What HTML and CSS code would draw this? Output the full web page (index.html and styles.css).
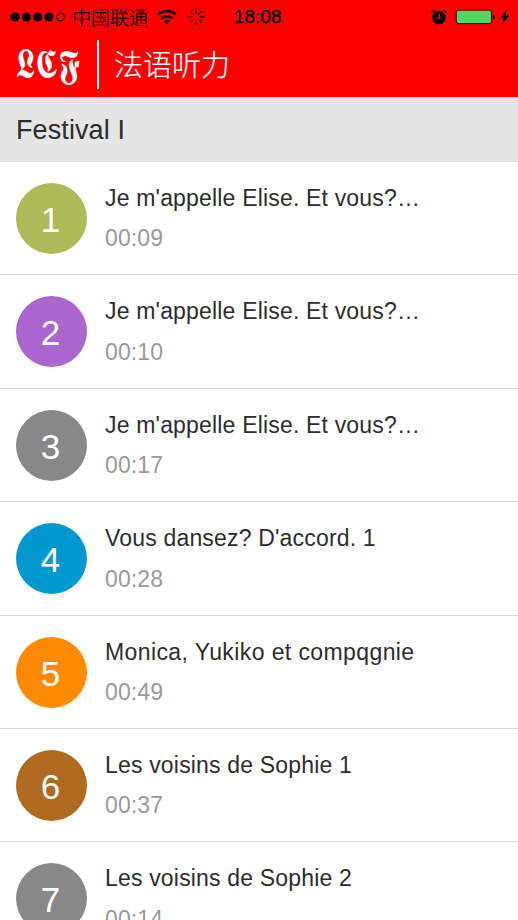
FILE: index.html
```html
<!DOCTYPE html>
<html lang="zh-CN">
<head>
<meta charset="utf-8">
<title>法语听力</title>
<link rel="stylesheet" href="styles.css">
</head>
<body>
<header class="header">
  <div class="status">
    <svg class="signal" width="56" height="12" viewBox="0 0 56 12"><circle cx="5" cy="6" r="4.6"/><circle cx="16.4" cy="6" r="4.6"/><circle cx="27.7" cy="6" r="4.6"/><circle cx="39" cy="6" r="4.6"/><circle cx="50.4" cy="6" r="4" fill="none" stroke="#000"/></svg>
    <span class="carrier">中国联通</span>
    <svg class="wifi" width="20" height="16" viewBox="0 0 20 16"><g fill="none" stroke="#000" stroke-width="2.5"><path d="M1.2 5.7a12.5 12.5 0 0 1 17.6 0"/><path d="M4.6 9.5a7.7 7.7 0 0 1 10.8 0"/></g><path d="M6.7 12q3.3-2.7 6.6 0L10 15.2z"/></svg>
    <svg class="spinner" width="18" height="18" viewBox="-9 -9 18 18" stroke="#000" stroke-width="1.4" stroke-linecap="round"><path d="M0-4v-4" opacity=".85"/><path d="M2.8-2.8l2.8-2.8" opacity=".9"/><path d="M4 0h4" opacity=".85"/><path d="M2.8 2.8l2.8 2.8" opacity=".7"/><path d="M0 4v4" opacity=".5"/><path d="M-2.8 2.8l-2.8 2.8" opacity=".4"/><path d="M-4 0h-4" opacity=".4"/><path d="M-2.8-2.8l-2.8-2.8" opacity=".4"/></svg>
    <span class="time">18:08</span>
    <svg class="alarm" width="16" height="16" viewBox="0 0 16 16"><circle cx="8" cy="8.6" r="6.8"/><path d="M.7 4.1A5 5 0 0 1 3.8 1.2M12.2 1.2a5 5 0 0 1 3.1 2.9" fill="none" stroke="#000" stroke-width="1.4"/><path d="M8.5 4.5v4.7H5" fill="none" stroke="red" stroke-width="1.3"/></svg>
    <svg class="battery" width="40" height="16" viewBox="0 0 40 16"><rect x="1.2" y="1.1" width="35.4" height="13.5" rx="2" fill="#4cd964" stroke="#720000" stroke-width="1.4"/><path d="M37.8 5.2q2.2.4 2.2 2.7t-2.2 2.7z"/></svg>
    <svg class="bolt" width="10" height="16" viewBox="0 0 10 16"><path d="M6.5.8.4 9h3.5L2 15.2 9.4 6.5H5.8z"/></svg>
  </div>
  <div class="bar">
    <span class="logo">𝕷𝕮𝕱</span>
    <i class="divider"></i>
    <h1 class="heading">法语听力</h1>
  </div>
</header>
<h2 class="section">Festival I</h2>
<ul class="list">
  <li class="row"><b class="num olive">1</b><div class="info"><p class="title">Je m'appelle Elise. Et vous?…</p><p class="dur">00:09</p></div></li>
  <li class="row"><b class="num purple">2</b><div class="info"><p class="title">Je m'appelle Elise. Et vous?…</p><p class="dur">00:10</p></div></li>
  <li class="row"><b class="num gray">3</b><div class="info"><p class="title">Je m'appelle Elise. Et vous?…</p><p class="dur">00:17</p></div></li>
  <li class="row"><b class="num blue">4</b><div class="info"><p class="title">Vous dansez? D'accord. 1</p><p class="dur">00:28</p></div></li>
  <li class="row"><b class="num orange">5</b><div class="info"><p class="title wide">Monica, Yukiko et compqgnie</p><p class="dur">00:49</p></div></li>
  <li class="row"><b class="num brown">6</b><div class="info"><p class="title">Les voisins de Sophie 1</p><p class="dur">00:37</p></div></li>
  <li class="row"><b class="num gray">7</b><div class="info"><p class="title">Les voisins de Sophie 2</p><p class="dur">00:14</p></div></li>
</ul>
</body>
</html>
```
FILE: styles.css
```css
* { box-sizing: border-box; margin: 0; padding: 0; }
html, body { height: 920px; overflow: hidden; }
body { background: #fff; color: #2d2d2d; font-family: "Liberation Sans", "Noto Sans CJK SC", sans-serif; }
svg { display: block; flex: none; }
.header { height: 97px; background: #f00; }
.status { display: flex; align-items: center; height: 33px; padding-left: 10px; color: #000; }
.carrier { width: 77px; margin-left: 6px; font: 300 19px/33px "Noto Sans CJK SC", sans-serif; white-space: nowrap; -webkit-text-stroke: .3px #000; }
.wifi { margin-left: 8px; }
.spinner { margin-left: 10px; }
.time { width: 49px; margin-left: 29px; font-size: 19px; line-height: 33px; -webkit-text-stroke: .4px #000; }
.alarm { margin-left: 148px; }
.battery { margin-left: 8px; }
.bolt { margin-left: 5px; }
.bar { display: flex; align-items: center; height: 63px; padding-left: 16px; color: #fff; }
.logo { width: 65px; font: 34px/48px "DejaVu Sans", serif; white-space: nowrap; transform: translateY(-2px) scale(1.02, 1.22); transform-origin: 0 50%; }
.divider { width: 2px; height: 49px; margin-left: 16px; background: #fff; }
.heading { margin-left: 15px; padding-bottom: 3px; font: 300 29px/60px "Noto Sans CJK SC", sans-serif; -webkit-text-stroke: .2px #fff; }
.section { height: 65px; padding-left: 16px; background: #e5e5e5; font-size: 27px; font-weight: 400; line-height: 66px; letter-spacing: .1px; }
.list { list-style: none; }
.row { display: flex; height: 113.4px; padding: 21px 0 0 16px; border-bottom: 1.5px solid #d8d8d8; }
.num { display: block; flex: none; width: 71px; height: 71px; padding-right: 2px; border-radius: 50%; color: #fff; font-size: 35px; font-weight: 400; line-height: 73px; text-align: center; }
.info { margin-left: 18px; }
.title { font-size: 23px; line-height: 30px; letter-spacing: .18px; white-space: nowrap; }
.title.wide { letter-spacing: .4px; }
.dur { margin-top: 10.4px; color: #999; font-size: 23px; line-height: 30px; letter-spacing: .1px; }
.olive { background: #aeb957; }
.purple { background: #a966cc; }
.gray { background: #888; }
.blue { background: #0099cf; }
.orange { background: #ff8a00; }
.brown { background: #b06a22; }
```
